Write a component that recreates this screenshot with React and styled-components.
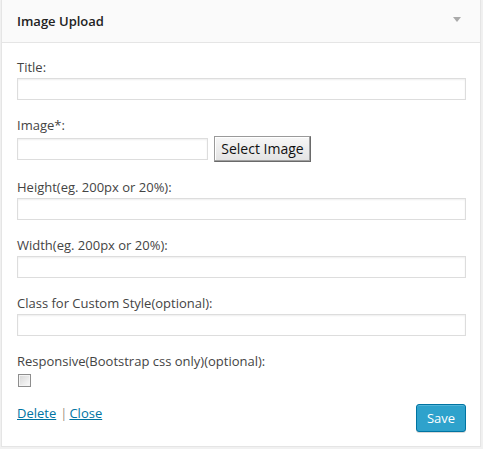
import styled, { createGlobalStyle } from "styled-components";

const GlobalStyle = createGlobalStyle`
  html, body {
    margin: 0;
    padding: 0;
    background: #f1f1f1;
  }
  body {
    font-family: "Open Sans", "Liberation Sans", sans-serif;
    font-size: 13px;
    color: #444;
  }
`;

const Widget = styled.div`
  width: 480px;
  margin-left: 1px;
  box-sizing: border-box;
  background: #fff;
  border: 1px solid #e5e5e5;
  border-top: none;
  box-shadow: 0 1px 1px rgba(0, 0, 0, 0.04);
`;

const Header = styled.div`
  height: 43px;
  box-sizing: border-box;
  display: flex;
  align-items: center;
  justify-content: space-between;
  padding: 0 19px 0 15px;
  background: #fafafa;
  border-bottom: 1px solid #e5e5e5;
`;

const HeaderTitle = styled.h3`
  margin: 0;
  font-size: 13px;
  font-weight: 600;
  line-height: 18px;
  color: #222;
  padding-bottom: 1px;
`;

const Arrow = styled.span`
  width: 0;
  height: 0;
  border-left: 4px solid transparent;
  border-right: 4px solid transparent;
  border-top: 5px solid #aaa;
  margin-bottom: 3px;
`;

const Body = styled.div`
  padding: 15px 14px 14px 15px;
`;

const Field = styled.div`
  margin-bottom: 16px;
`;

const Label = styled.label`
  display: block;
  line-height: 18px;
  margin-bottom: ${(p) => p.gap || 2}px;
  color: #444;
`;

const TextInput = styled.input`
  display: block;
  box-sizing: border-box;
  width: ${(p) => p.w || "100%"};
  height: 22px;
  margin: 0;
  padding: 2px 4px;
  border: 1px solid #ddd;
  box-shadow: inset 0 1px 2px rgba(0, 0, 0, 0.07);
  background: #fff;
  font: inherit;
  outline: none;
`;

const InlineRow = styled.div`
  display: flex;
  align-items: center;
  gap: 6px;
`;

const PlainButton = styled.button`
  box-sizing: border-box;
  height: 26px;
  width: 97px;
  padding: 0 4px 1px;
  font-family: "Open Sans", "Liberation Sans", sans-serif;
  font-size: 14px;
  color: #111;
  background: linear-gradient(#f7f7f7, #e3e3e3);
  border: 1px solid #9a9a9a;
  border-right-color: #6a6a6a;
  border-bottom-color: #6a6a6a;
  box-shadow: inset -1px -1px 0 #a0a0a0, inset 1px 1px 0 #fff;
  border-radius: 0;
`;

const Checkbox = styled.span`
  display: block;
  width: 13px;
  height: 13px;
  box-sizing: border-box;
  margin-left: 1px;
  border: 1px solid #8e8e8e;
  box-shadow: inset 0 0 0 1px #f4f4f4;
  background: linear-gradient(135deg, #d6d6d6, #fbfbfb);
`;

const Footer = styled.div`
  display: flex;
  justify-content: space-between;
  align-items: flex-start;
`;

const Links = styled.div`
  line-height: 18px;
  padding-top: 1px;
  color: #999;
`;

const Link = styled.a`
  color: #0074a2;
  text-decoration: underline;
  cursor: pointer;
`;

const Sep = styled.span`
  margin: 0 2px 0 4px;
  color: #a09282;
`;

const SaveButton = styled.button`
  box-sizing: border-box;
  width: 50px;
  height: 28px;
  margin-top: 1px;
  padding: 0 0 1px;
  font-family: "Open Sans", "Liberation Sans", sans-serif;
  font-size: 13px;
  color: #fff;
  background: #2ea2cc;
  border: 1px solid #0074a2;
  border-radius: 3px;
  box-shadow: inset 0 1px 0 rgba(120, 200, 230, 0.5), 0 1px 0 rgba(0, 0, 0, 0.15);
`;

const fields = [
  "Height(eg. 200px or 20%):",
  "Width(eg. 200px or 20%):",
  "Class for Custom Style(optional):",
];

export default function App() {
  return (
    <>
      <GlobalStyle />
      <Widget>
        <Header>
          <HeaderTitle>Image Upload</HeaderTitle>
          <Arrow />
        </Header>
        <Body>
          <Field>
            <Label>Title:</Label>
            <TextInput />
          </Field>
          <Field>
            <Label>Image*:</Label>
            <InlineRow>
              <TextInput w="191px" />
              <PlainButton>Select Image</PlainButton>
            </InlineRow>
          </Field>
          {fields.map((label) => (
            <Field key={label}>
              <Label>{label}</Label>
              <TextInput />
            </Field>
          ))}
          <Field>
            <Label gap={4}>Responsive(Bootstrap css only)(optional):</Label>
            <Checkbox />
          </Field>
          <Footer>
            <Links>
              <Link>Delete</Link>
              <Sep>|</Sep>
              <Link>Close</Link>
            </Links>
            <SaveButton>Save</SaveButton>
          </Footer>
        </Body>
      </Widget>
    </>
  );
}
